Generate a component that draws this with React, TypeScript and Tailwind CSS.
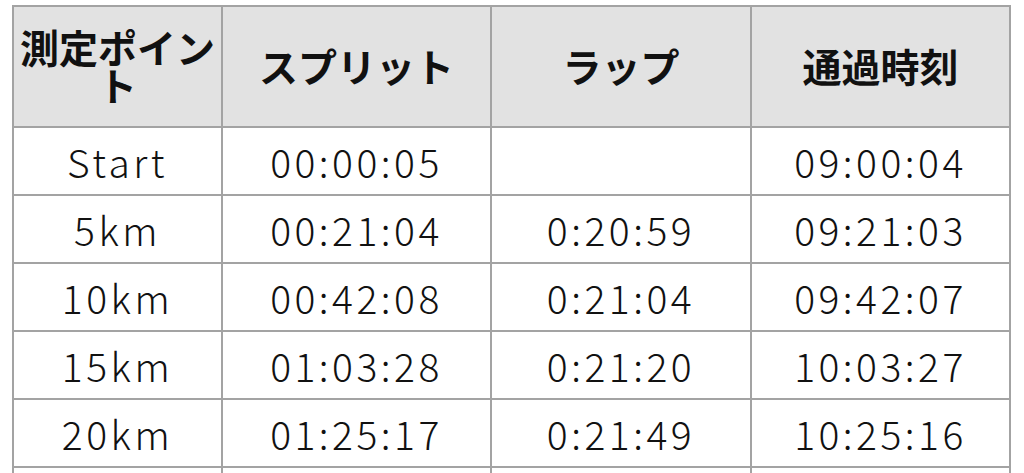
const rows = [
  { point: 'Start', split: '00:00:05', lap: '', time: '09:00:04' },
  { point: '5km', split: '00:21:04', lap: '0:20:59', time: '09:21:03' },
  { point: '10km', split: '00:42:08', lap: '0:21:04', time: '09:42:07' },
  { point: '15km', split: '01:03:28', lap: '0:21:20', time: '10:03:27' },
  { point: '20km', split: '01:25:17', lap: '0:21:49', time: '10:25:16' },
];

export default function App() {
  return (
    <div
      className="bg-white h-[473px] overflow-hidden pl-[12px] pt-[5px] text-[#111]"
      style={{ fontFamily: '"Noto Sans CJK JP", "Noto Sans", sans-serif' }}
    >
      <table className="table-fixed border-collapse w-[997px]">
        <colgroup>
          <col className="w-[209px]" />
          <col className="w-[269px]" />
          <col className="w-[260px]" />
          <col className="w-[259px]" />
        </colgroup>
        <thead>
          <tr className="h-[121px] bg-[#e2e2e2]">
            {['測定ポイント', 'スプリット', 'ラップ', '通過時刻'].map((h) => (
              <th
                key={h}
                className="border-2 border-[#a3a3a3] px-[2px] pb-[4px] text-[39px] leading-[38px] font-bold text-center"
              >
                {h}
              </th>
            ))}
          </tr>
        </thead>
        <tbody>
          {rows.map((r) => (
            <tr key={r.point} className="h-[68px]">
              {[r.point, r.split, r.lap, r.time].map((c, i) => (
                <td
                  key={i}
                  className="border-2 border-[#a3a3a3] text-center text-[39px] leading-none font-light tracking-[3.5px]"
                >
                  {c}
                </td>
              ))}
            </tr>
          ))}
          <tr className="h-[68px]">
            <td className="border-2 border-[#a3a3a3]" />
            <td className="border-2 border-[#a3a3a3]" />
            <td className="border-2 border-[#a3a3a3]" />
            <td className="border-2 border-[#a3a3a3]" />
          </tr>
        </tbody>
      </table>
    </div>
  );
}
